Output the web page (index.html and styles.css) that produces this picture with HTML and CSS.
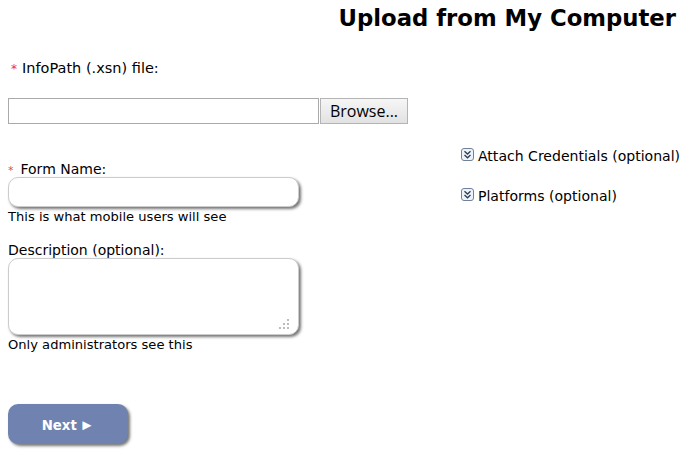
FILE: index.html
```html
<!DOCTYPE html>
<html lang="en">
<head>
<meta charset="utf-8">
<title>Upload from My Computer</title>
<link rel="stylesheet" href="styles.css">
</head>
<body>
<h1 class="title">Upload from My Computer</h1>
<div class="file-label"><span class="req req-file">*</span>InfoPath (.xsn) file:</div>
<div class="file-row">
  <input class="file-path" type="text" aria-label="File path">
  <button class="browse" type="button">Browse...</button>
</div>
<div class="columns">
  <div class="left">
    <label class="label"><span class="req req-name">*</span>Form Name:</label>
    <input class="field" type="text">
    <div class="hint">This is what mobile users will see</div>
    <label class="label label-desc">Description (optional):</label>
    <div class="area-wrap">
      <textarea class="field area"></textarea>
      <svg class="grip" width="11" height="11" viewBox="0 0 11 11"><g fill="#bdbdbd"><rect x="8" y="0" width="2" height="2"/><rect x="4" y="4" width="2" height="2"/><rect x="8" y="4" width="2" height="2"/><rect x="0" y="8" width="2" height="2"/><rect x="4" y="8" width="2" height="2"/><rect x="8" y="8" width="2" height="2"/></g></svg>
    </div>
    <div class="hint">Only administrators see this</div>
    <button class="next" type="button">Next <span class="arrow">►</span></button>
  </div>
  <div class="right">
    <div class="expander">
      <svg class="chev" width="13" height="13" viewBox="0 0 13 13"><rect x="0.5" y="0.5" width="12" height="12" rx="2.5" fill="#eef3fa" stroke="#6f8299"/><path d="M3.5 3.2 6.5 6 9.5 3.2M3.5 7 6.5 9.8 9.5 7" fill="none" stroke="#2c3e50" stroke-width="1.3"/></svg>
      <span>Attach Credentials (optional)</span>
    </div>
    <div class="expander">
      <svg class="chev" width="13" height="13" viewBox="0 0 13 13"><rect x="0.5" y="0.5" width="12" height="12" rx="2.5" fill="#eef3fa" stroke="#6f8299"/><path d="M3.5 3.2 6.5 6 9.5 3.2M3.5 7 6.5 9.8 9.5 7" fill="none" stroke="#2c3e50" stroke-width="1.3"/></svg>
      <span>Platforms (optional)</span>
    </div>
  </div>
</div>
</body>
</html>
```

FILE: styles.css
```css
* { box-sizing: border-box; }
html, body { margin: 0; background: #fff; }
body {
  width: 683px;
  height: 453px;
  overflow: hidden;
  padding: 0 7px 0 8px;
  font-family: "DejaVu Sans", Verdana, sans-serif;
  font-size: 14px;
  color: #000;
}
.title {
  margin: 0;
  padding: 4px 0 0;
  height: 34px;
  line-height: 28px;
  font-size: 22.75px;
  font-weight: 700;
  text-align: right;
}
.file-label { margin-top: 26px; height: 17px; line-height: 17px; padding-left: 3px; font-size: 14.5px; }
.req { color: #e33; font-size: 12px; }
.req-file { margin-right: 5px; }
.req-name { color: #c55; font-size: 11px; margin-right: 7px; }
.file-row { display: flex; gap: 1px; margin-top: 21px; }
.file-path { width: 311px; height: 26px; border: 1px solid #aaa; background: #fff; padding: 0; }
.browse {
  width: 88px;
  height: 26px;
  padding: 0;
  border: 1px solid #b4b4b4;
  background: linear-gradient(#f6f6f6, #e2e2e2);
  font-family: "Open Sans", sans-serif;
  font-size: 16px;
  color: #000;
}
.columns { display: flex; }
.left { width: 453px; padding-top: 36px; flex: none; }
.right { padding-top: 23px; }
.label { display: block; height: 17px; line-height: 19px; }
.label-desc { margin-top: 16px; }
.field {
  display: block;
  width: 291px;
  height: 30px;
  border: 1px solid #ccc;
  border-radius: 10px;
  background: #fff;
  box-shadow: 2px 2px 3px #777;
  padding: 0;
  outline: none;
}
.hint { font-size: 13.08px; height: 17px; line-height: 17px; margin-top: 1px; }
.area-wrap { position: relative; width: 291px; height: 77px; }
.area { height: 77px; resize: none; }
.grip { position: absolute; right: 9px; bottom: 5px; }
.next {
  display: block;
  width: 120px;
  height: 40px;
  margin-top: 51px;
  border: 0;
  border-radius: 10px;
  background: #6f82b0;
  box-shadow: 2px 2px 3px #777;
  color: #fff;
  font-family: "DejaVu Sans", sans-serif;
  font-size: 13.3px;
  font-weight: 700;
  word-spacing: -2px;
  padding: 2px 0 0 0;
}
.arrow { font-family: "Liberation Sans", sans-serif; font-size: 15px; line-height: 0; }
.expander { display: flex; align-items: center; gap: 4px; height: 18px; margin-bottom: 22px; white-space: nowrap; font-size: 14.05px; }
.chev { flex: none; margin-top: -3px; }
```
